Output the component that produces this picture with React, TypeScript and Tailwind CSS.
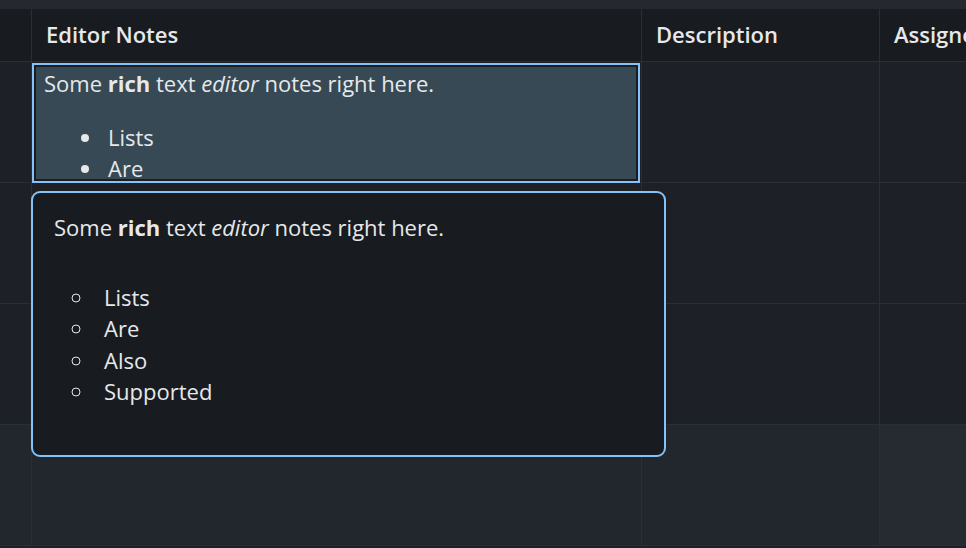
import React from 'react';

const line = 'border-[#2a2e35]';

const NoteBody: React.FC<{ popup?: boolean }> = ({ popup }) => (
  <>
    <p>
      Some <b className="font-bold">rich</b> text <i>editor</i> notes right here.
    </p>
    <ul className={popup ? 'list-[circle] pl-[41px] mt-[38px]' : 'list-disc pl-[60px] mt-[22px]'}>
      <li className={popup ? 'pl-[9px]' : 'pl-[4px]'}>Lists</li>
      <li className={popup ? 'pl-[9px]' : 'pl-[4px]'}>Are</li>
      <li className={popup ? 'pl-[9px]' : 'pl-[4px]'}>Also</li>
      <li className={popup ? 'pl-[9px]' : 'pl-[4px]'}>Supported</li>
    </ul>
  </>
);

export default function App() {
  const rows = [0, 1, 2, 3];
  return (
    <div
      className="relative w-[966px] h-[548px] overflow-hidden bg-[#1e2028] text-[#e6e8ea] text-[22px] leading-[31.5px]"
      style={{ fontFamily: '"Open Sans", "Noto Sans", sans-serif' }}
    >
      <div className="h-[9px] bg-[#25282e]" />

      {/* header */}
      <div className={`flex h-[53px] bg-[#181b1f] border-b ${line} font-semibold`}>
        <div className={`w-[32px] shrink-0 border-r ${line}`} />
        <div className={`w-[610px] shrink-0 border-r ${line} px-[14px] flex items-center`}>Editor Notes</div>
        <div className={`w-[238px] shrink-0 border-r ${line} px-[14px] flex items-center`}>Description</div>
        <div className="flex-1 min-w-0 px-[14px] flex items-center whitespace-nowrap overflow-hidden">Assigned</div>
      </div>

      {rows.map(r => (
        <div key={r} className={`flex h-[121px] border-b ${line} ${r === 3 ? 'bg-[#22262d]' : ''}`}>
          <div className={`w-[32px] shrink-0 border-r ${line}`} />
          <div className={`relative w-[610px] shrink-0 border-r ${line}`}>
            {r === 0 && (
              <div className="absolute left-0 right-[1px] top-[1px] -bottom-[1px] z-10 border-2 border-[#84c3f7]">
                <div className="h-full border-2 border-[#1a1d21] bg-[#374955] overflow-hidden px-[8px] pt-[1px]">
                  <NoteBody />
                </div>
              </div>
            )}
          </div>
          <div className={`w-[238px] shrink-0 border-r ${line}`} />
          <div className={`flex-1 ${r === 3 ? 'bg-[#262b31]' : ''}`} />
        </div>
      ))}

      {/* expanded editor popup */}
      <div className="absolute left-[31px] top-[191px] w-[635px] h-[266px] z-20 rounded-[9px] border-2 border-[#84c3f7] bg-[#181b1f] px-[21px] pt-[19px]">
        <NoteBody popup />
      </div>
    </div>
  );
}
